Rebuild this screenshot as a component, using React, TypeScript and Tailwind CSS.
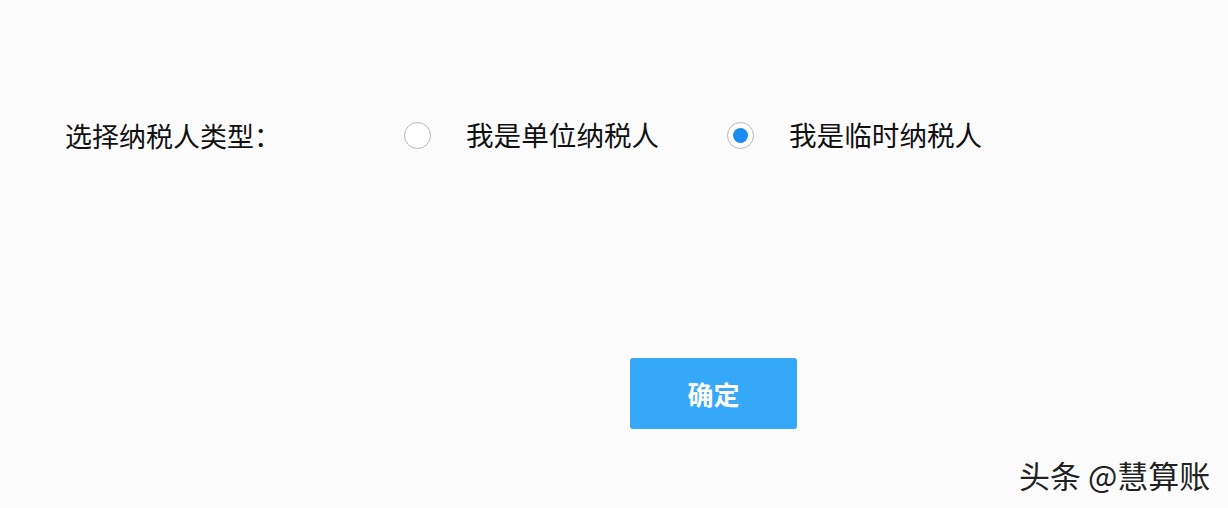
import { useState } from "react";

const options = [
  { id: "unit", label: "我是单位纳税人" },
  { id: "temp", label: "我是临时纳税人" },
] as const;

export default function App() {
  const [selected, setSelected] = useState<string>("temp");

  return (
    <main
      className="relative h-[508px] w-full overflow-hidden bg-[#fbfbfc] text-[#111111]"
      style={{ fontFamily: '"Noto Sans CJK SC", "Noto Sans", sans-serif' }}
    >
      <div className="mt-[108px] flex h-[54px] items-center pl-[65px]">
        <span className="w-[339px] text-[27px] leading-none">选择纳税人类型：</span>
        {options.map((opt) => {
          const active = selected === opt.id;
          return (
            <label
              key={opt.id}
              className="flex w-[323px] cursor-pointer items-center"
              onClick={() => setSelected(opt.id)}
            >
              <span className="flex h-[27px] w-[27px] items-center justify-center rounded-full border border-[#b8b8bc] bg-white">
                {active && <span className="h-[15px] w-[15px] rounded-full bg-[#1a8cf0]" />}
              </span>
              <span className="ml-[35px] text-[27.6px] leading-none">{opt.label}</span>
            </label>
          );
        })}
      </div>

      <div className="mt-[196px] pl-[630px]">
        <button className="flex h-[71px] w-[167px] items-center justify-center rounded-[3px] bg-[#35a8f8] text-[26px] font-bold text-white">
          确定
        </button>
      </div>

      <div
        className="absolute left-[1019px] top-[459px] text-[31px] leading-none text-[#222222]"
        style={{ textShadow: "1px 1px 0 #ffffff, -1px -1px 0 #ffffff" }}
      >
        头条 @慧算账
      </div>
    </main>
  );
}
